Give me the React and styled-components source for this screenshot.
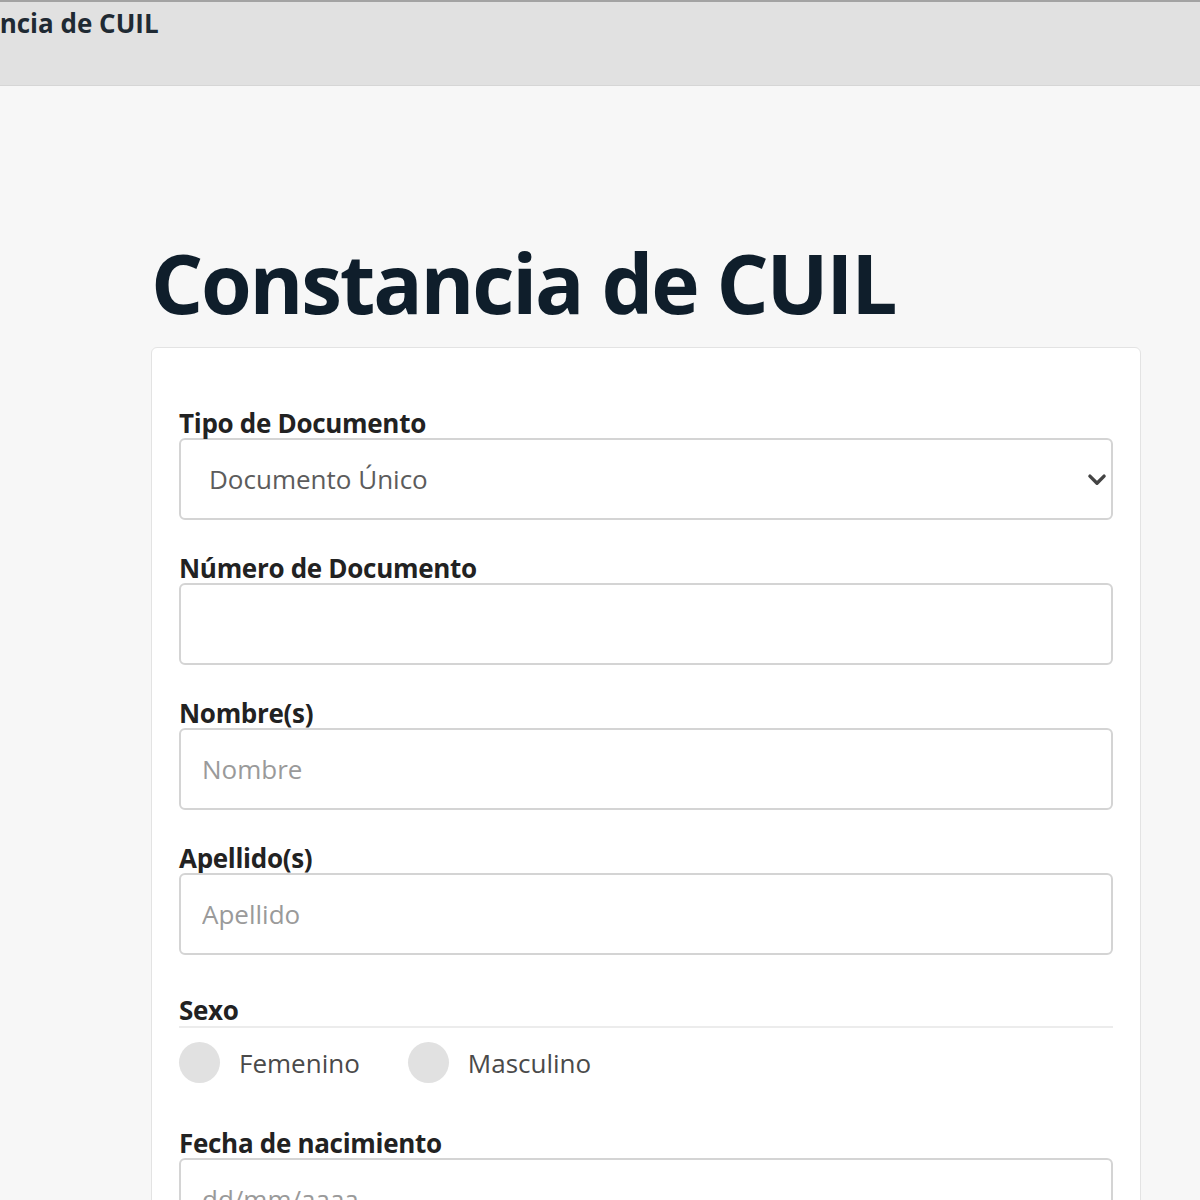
import React from 'react';
import styled, { createGlobalStyle } from 'styled-components';

const GlobalStyle = createGlobalStyle`
  html, body {
    margin: 0;
    padding: 0;
    background: #f7f7f7;
    font-family: "Open Sans", "Noto Sans", sans-serif;
    overflow: hidden;
  }
  * {
    box-sizing: border-box;
  }
`;

const TopBar = styled.header`
  height: 86px;
  background: #e1e1e1;
  border-top: 2px solid #a3a3a3;
  border-bottom: 1px solid #d6d6d6;
  overflow: hidden;
`;

const BarTitle = styled.div`
  margin-left: -90px;
  padding-top: 3px;
  font-size: 26px;
  font-weight: 700;
  color: #1f2a33;
  white-space: nowrap;
`;

const Main = styled.main`
  padding: 0 59px 0 151px;
`;

const Heading = styled.h1`
  margin: 147px 0 16px 0;
  font-size: 82px;
  line-height: 1.2;
  font-weight: 700;
  color: #0f1e2b;
  letter-spacing: -2.2px;
`;

const Card = styled.section`
  background: #ffffff;
  border: 1px solid #e3e3e3;
  border-radius: 6px;
  padding: 58px 27px 27px 27px;
`;

const Field = styled.div`
  margin-bottom: 31px;
`;

const Label = styled.label`
  display: block;
  font-size: 26px;
  font-weight: 700;
  color: #222;
  line-height: 34px;
  margin-bottom: -2px;
  letter-spacing: -0.3px;
`;

const inputBox = `
  width: 100%;
  height: 82px;
  border: 2px solid #d4d4d4;
  border-radius: 6px;
  background: #fff;
  font-family: "Open Sans", "Noto Sans", sans-serif;
  font-size: 26px;
  outline: none;
`;

const SelectWrap = styled.div`
  ${inputBox}
  display: flex;
  align-items: center;
  justify-content: space-between;
  padding: 0 0 0 28px;
  color: #5c5c5c;
`;

const Chevron = styled.svg`
  width: 34px;
  height: 34px;
  margin-right: -3px;
`;

const TextInput = styled.input`
  ${inputBox}
  padding: 0 21px;
  color: #333;

  &::placeholder {
    color: #9a9a9a;
  }
`;

const RadioGroup = styled.fieldset`
  border: none;
  margin: 39px 0 43px 0;
  padding: 0;
`;

const Legend = styled.div`
  font-size: 26px;
  font-weight: 700;
  color: #222;
  line-height: 32px;
  border-bottom: 2px solid #ececec;
  margin-bottom: 14px;
  letter-spacing: -0.3px;
`;

const RadioRow = styled.div`
  display: flex;
  align-items: center;
  gap: 48px;
`;

const RadioOption = styled.label`
  display: flex;
  align-items: center;
  gap: 19px;
  font-size: 26px;
  color: #4a4a4a;
`;

const RadioDot = styled.span`
  width: 41px;
  height: 41px;
  border-radius: 50%;
  background: #e1e1e1;
`;

function App() {
  return (
    <>
      <GlobalStyle />
      <TopBar>
        <BarTitle>Constancia de CUIL</BarTitle>
      </TopBar>
      <Main>
        <Heading>Constancia de CUIL</Heading>
        <Card>
          <Field>
            <Label>Tipo de Documento</Label>
            <SelectWrap>
              <span>Documento Único</span>
              <Chevron viewBox="0 0 24 24" fill="none" stroke="#444" strokeWidth="2.4" strokeLinecap="round" strokeLinejoin="round">
                <path d="M7 10l5 5 5-5" />
              </Chevron>
            </SelectWrap>
          </Field>
          <Field>
            <Label>Número de Documento</Label>
            <TextInput type="text" />
          </Field>
          <Field>
            <Label>Nombre(s)</Label>
            <TextInput type="text" placeholder="Nombre" />
          </Field>
          <Field>
            <Label>Apellido(s)</Label>
            <TextInput type="text" placeholder="Apellido" />
          </Field>
          <RadioGroup>
            <Legend>Sexo</Legend>
            <RadioRow>
              <RadioOption>
                <RadioDot />
                Femenino
              </RadioOption>
              <RadioOption>
                <RadioDot />
                Masculino
              </RadioOption>
            </RadioRow>
          </RadioGroup>
          <Field>
            <Label>Fecha de nacimiento</Label>
            <TextInput type="text" placeholder="dd/mm/aaaa" />
          </Field>
        </Card>
      </Main>
    </>
  );
}

export default App;
